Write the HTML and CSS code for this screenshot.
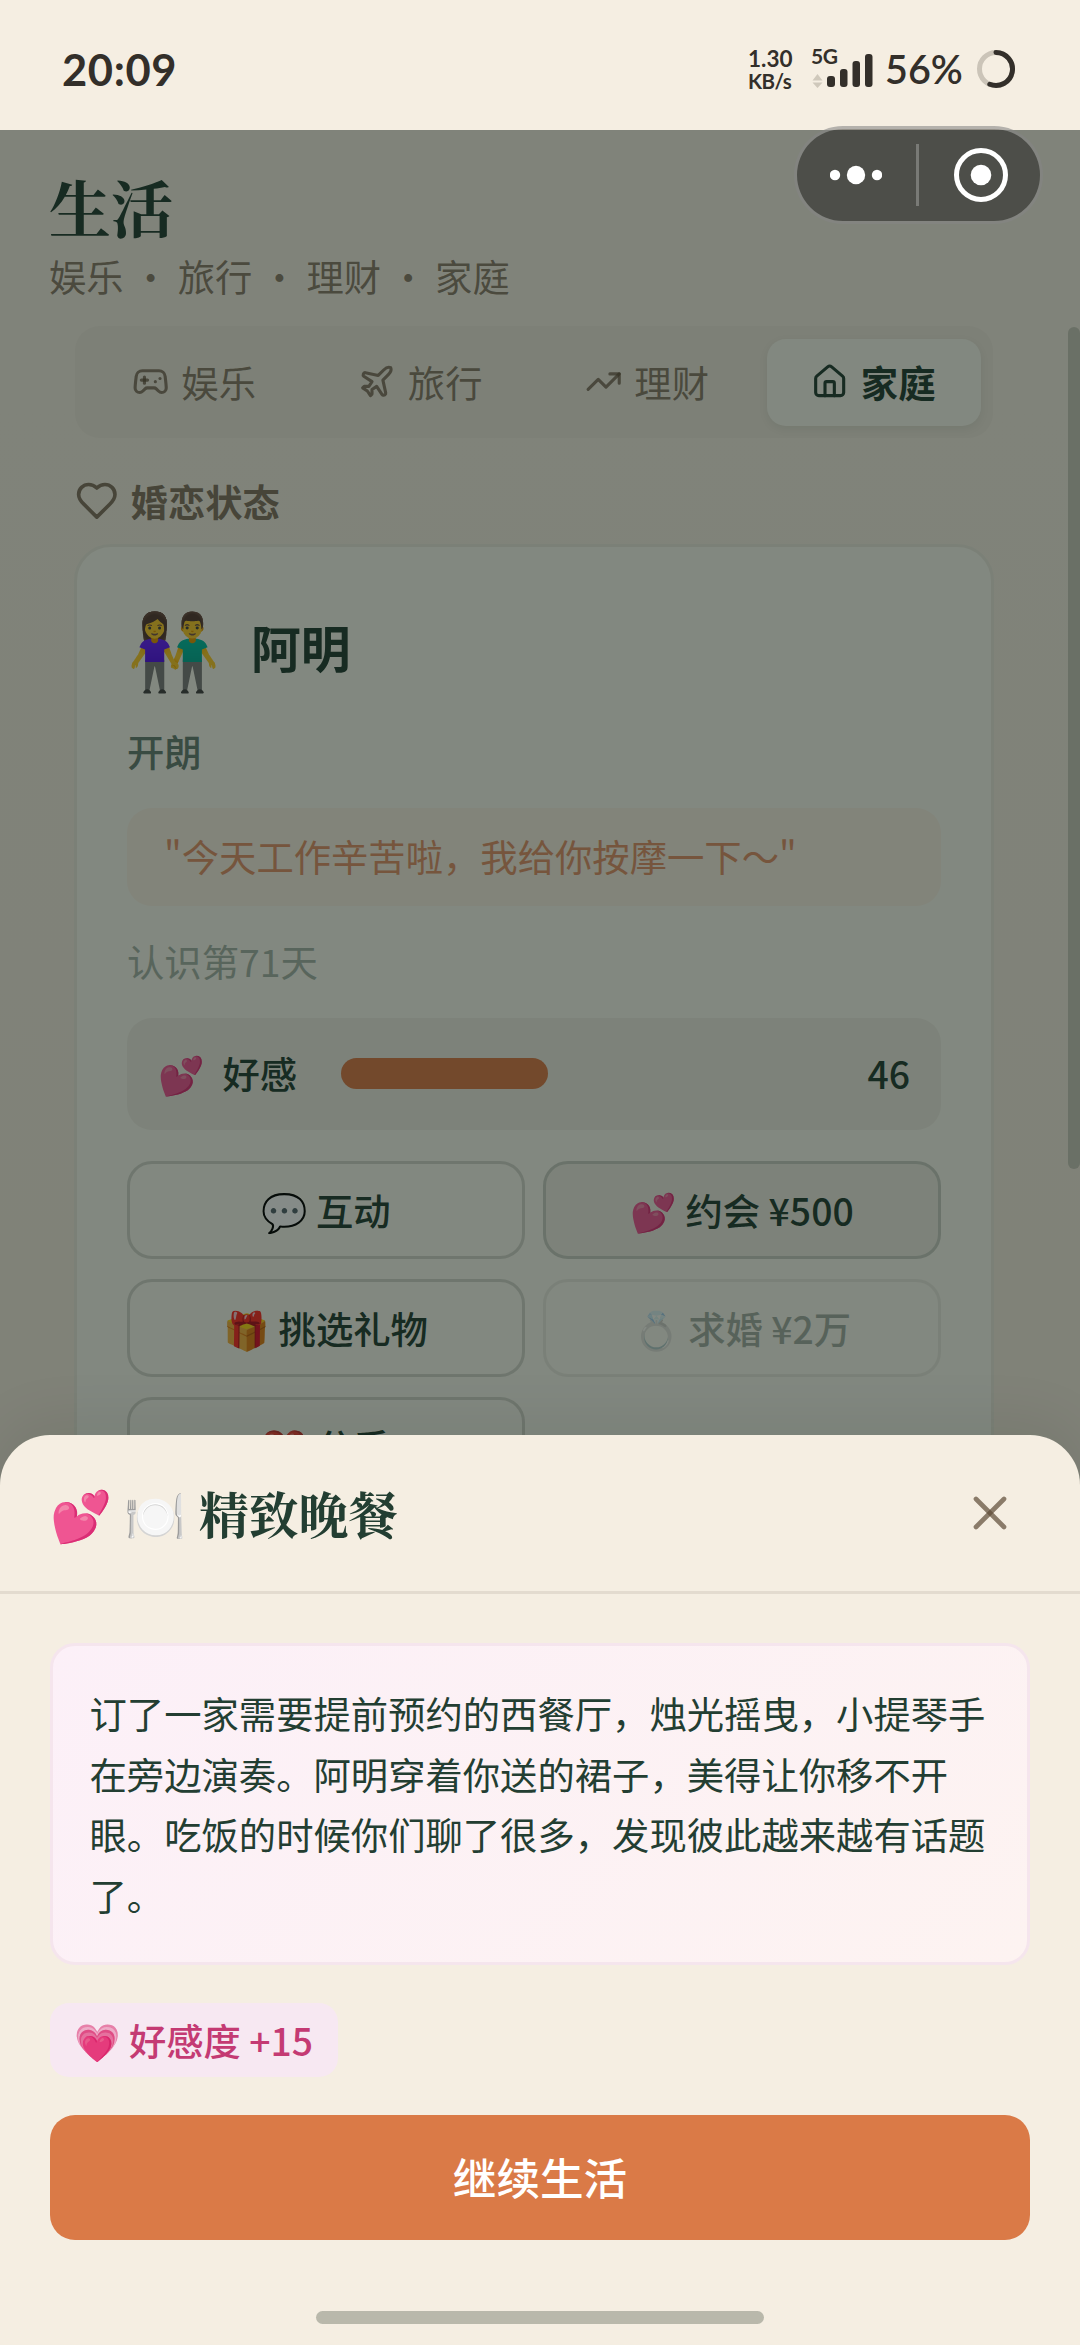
FILE: index.html
```html
<!DOCTYPE html>
<html lang="zh-CN">
<head>
<meta charset="utf-8">
<title>生活</title>
<link rel="stylesheet" href="styles.css">
</head>
<body>
<div class="phone">
  <header class="status">
    <span class="clock">20:09</span>
    <div class="status-right">
      <div class="speed"><span>1.30</span><span class="unit">KB/s</span></div>
      <div class="signal">
        <span class="net">5G</span>
        <svg width="62" height="42" viewBox="0 0 62 42">
          <path d="M0.500 34.500L5.500 28L10.500 34.500ZM0.500 36.500H10.500L5.500 42Z" fill="#cfc8bb"/>
          <g fill="#332f2a"><rect x="15" y="30" width="8" height="11" rx="3"/><rect x="28" y="23" width="7.500" height="18" rx="3"/><rect x="40.500" y="15" width="7.500" height="26" rx="3"/><rect x="53" y="8" width="7.500" height="33" rx="3"/></g>
        </svg>
      </div>
      <span class="percent">56%</span>
      <svg class="ring" width="40" height="40" viewBox="0 0 40 40" fill="none" stroke-width="5">
        <circle cx="20" cy="20" r="16.500" stroke="#cbc4b8"/>
        <path d="M20 3.500A16.500 16.500 0 1 1 13.800 35.300" stroke="#332f2a" stroke-linecap="round"/>
      </svg>
    </div>
  </header>

  <main class="screen">
    <div class="page">
      <h1 class="title">生活</h1>
      <p class="subtitle">娱乐 ・ 旅行 ・ 理财 ・ 家庭</p>
      <nav class="tabs">
        <div class="tab">
          <svg class="icon" viewBox="0 0 24 24"><path d="M6 11h4"/><path d="M8 9v4"/><path d="M15 12h.01"/><path d="M18 10h.01"/><path d="M17.320 5H6.680a4 4 0 0 0-3.978 3.590c-.006.052-.010.101-.017.152C2.604 9.416 2 14.456 2 16a3 3 0 0 0 3 3c1 0 1.500-.5 2-1l1.414-1.414A2 2 0 0 1 9.828 16h4.344a2 2 0 0 1 1.414.586L17 18c.5.5 1 1 2 1a3 3 0 0 0 3-3c0-1.545-.604-6.584-.685-7.258-.007-.050-.011-.100-.017-.151A4 4 0 0 0 17.320 5z"/></svg>
          <span>娱乐</span>
        </div>
        <div class="tab">
          <svg class="icon" viewBox="0 0 24 24"><path d="M17.800 19.200 16 11l3.500-3.500C21 6 21.500 4 21 3c-1-.5-3 0-4.500 1.500L13 8 4.800 6.200c-.5-.1-.9.1-1.100.5l-.3.5c-.2.5-.1 1 .3 1.300L9 12l-2 3H4l-1 1 3 2 2 3 1-1v-3l3-2 3.500 5.300c.3.4.8.5 1.300.3l.5-.2c.4-.3.6-.7.5-1.200z"/></svg>
          <span>旅行</span>
        </div>
        <div class="tab">
          <svg class="icon" viewBox="0 0 24 24"><path d="M22 7 13.500 15.500l-5-5L2 17"/><path d="M16 7h6v6"/></svg>
          <span>理财</span>
        </div>
        <div class="tab active">
          <svg class="icon" viewBox="0 0 24 24"><path d="M15 21v-8a1 1 0 0 0-1-1h-4a1 1 0 0 0-1 1v8"/><path d="M3 10a2 2 0 0 1 .709-1.528l7-5.999a2 2 0 0 1 2.582 0l7 5.999A2 2 0 0 1 21 10v9a2 2 0 0 1-2 2H5a2 2 0 0 1-2-2z"/></svg>
          <span>家庭</span>
        </div>
      </nav>

      <h2 class="section">
        <svg class="icon heart" viewBox="0 0 24 24"><path d="M19 14c1.490-1.460 3-3.210 3-5.500A5.500 5.500 0 0 0 16.500 3c-1.760 0-3 .5-4.500 2-1.500-1.500-2.740-2-4.500-2A5.500 5.500 0 0 0 2 8.500c0 2.300 1.500 4.050 3 5.500l7 7Z"/></svg>
        <span>婚恋状态</span>
      </h2>

      <section class="card">
        <div class="person"><span class="avatar">👫</span><span class="name">阿明</span></div>
        <p class="trait">开朗</p>
        <p class="quote">"今天工作辛苦啦，我给你按摩一下～"</p>
        <p class="days">认识第71天</p>
        <div class="stat">
          <span class="stat-icon">💕</span><span class="stat-label">好感</span>
          <div class="track"><div class="fill" style="width:46%"></div></div>
          <span class="stat-value">46</span>
        </div>
        <div class="actions">
          <div class="action">💬 互动</div>
          <div class="action featured">💕 约会 ¥500</div>
          <div class="action">🎁 挑选礼物</div>
          <div class="action disabled">💍 求婚 ¥2万</div>
          <div class="action">💔 分手</div>
        </div>
      </section>
      <div class="scrollbar"></div>
    </div>
    <div class="overlay"></div>

    <section class="sheet">
      <div class="sheet-head">
        <h2 class="sheet-title">💕 🍽️ 精致晚餐</h2>
        <svg class="icon close" viewBox="0 0 24 24"><path d="M18 6 6 18"/><path d="m6 6 12 12"/></svg>
      </div>
      <div class="sheet-body">
        <p class="story">订了一家需要提前预约的西餐厅，烛光摇曳，小提琴手在旁边演奏。阿明穿着你送的裙子，美得让你移不开眼。吃饭的时候你们聊了很多，发现彼此越来越有话题了。</p>
        <span class="chip">💗 好感度 +15</span>
        <div class="continue">继续生活</div>
      </div>
      <div class="home-bar"></div>
    </section>
  </main>

  <div class="capsule">
    <svg height="20" viewBox="0 0 52 20" class="dots" fill="#fff"><circle cx="5" cy="10" r="5.200"/><circle cx="26" cy="10" r="9.200"/><circle cx="47" cy="10" r="5.200"/></svg>
    <i class="divider"></i>
    <svg width="56" height="56" viewBox="0 0 56 56" class="target"><circle cx="28" cy="28" r="24.500" fill="none" stroke="#fff" stroke-width="5"/><circle cx="28" cy="28" r="10.300" fill="#fff"/></svg>
  </div>
</div>
</body>
</html>
```
FILE: styles.css
```css
* { box-sizing: border-box; }
body, h1, h2, p { margin: 0; }
body {
  background: #f5eee2;
  color: #233e32;
  font-family: "Noto Sans CJK SC", "Noto Color Emoji", sans-serif;
  font-size: 37.35px;
}
.phone { position: relative; width: 1080px; height: 2345px; overflow: hidden; display: flex; flex-direction: column; }

/* system status bar */
.status {
  height: 130px; flex: none; padding: 0 64px 0 62px;
  display: flex; justify-content: space-between;
  font-family: Lato, sans-serif; font-weight: 700; color: #332f2a;
}
.clock { font-size: 43.500px; line-height: 52px; padding-top: 43px; letter-spacing: .6px; }
.status-right { display: flex; align-items: flex-start; }
.speed { display: flex; flex-direction: column; font-size: 22.500px; line-height: 22px; padding-top: 48px; width: 64px; white-space: nowrap; }
.unit { font-size: 20.500px; letter-spacing: -.5px; }
.signal { width: 62px; display: flex; flex-direction: column; padding-top: 46px; }
.net { font-size: 21px; line-height: 20px; height: 0; letter-spacing: -.5px; margin-left: -1px; }
.percent { font-size: 39.500px; line-height: 48px; padding-top: 45px; font-weight: 600; width: 91px; margin-left: 11px; }
.ring { margin-top: 49px; }

.screen { position: relative; flex: 1; }
.page { position: relative; height: 1400px; overflow: hidden; padding: 44px 87px 0 50px; background: linear-gradient(#f5eee2 20%, #f5ecde); }
.overlay { position: absolute; inset: 0; background: rgba(11, 24, 18, 0.5); }

.title, .sheet-title { font-family: "Noto Serif CJK SC", "Noto Color Emoji", "Liberation Serif", serif; font-weight: 700; }
.title { font-size: 62px; line-height: 66px; margin-left: -1px; }
.subtitle { line-height: 52px; margin: 10px 0 0 -1px; color: rgba(92, 74, 54, .7); }

.icon { width: 37.350px; height: 37.350px; flex: none; fill: none; stroke: currentColor; stroke-width: 2; stroke-linecap: round; stroke-linejoin: round; }

.tabs {
  margin: 24px 0 0 24.500px; height: 112px; padding: 12.500px;
  display: grid; grid-template-columns: repeat(4, 1fr); gap: 12.500px;
  border-radius: 25px; background: #eee8dc;
}
.tab { display: flex; align-items: center; justify-content: center; gap: 12px; color: rgba(92, 74, 54, .7); line-height: 52px; border-radius: 19px; }
.tab.active { background: #f9f8ee; color: #233e32; font-weight: 700; box-shadow: 0 3px 9px rgba(35, 62, 50, .08); }

.section { display: flex; align-items: center; gap: 12.500px; margin: 36px 0 0 24.500px; font-size: 37.350px; line-height: 54px; font-weight: 700; color: rgba(92, 74, 54, .75); }
.heart { width: 43.600px; height: 43.600px; }

.card { margin: 16px -1px 0 24px; height: 1000px; padding: 42.500px 50px 0; border: 3px solid #eae9dd; border-radius: 37px; background: #f9f8ee; }
.person { display: flex; align-items: center; gap: 31px; height: 112px; }
.avatar { font-size: 74.700px; line-height: 112px; }
.name { font-size: 49.800px; line-height: 72px; font-weight: 700; }
.trait { line-height: 54px; margin-top: 22.500px; font-weight: 500; color: #677e72; }
.quote { margin-top: 30px; height: 98px; padding: 21px 37px; line-height: 54px; border-radius: 25px; background: #f8f0e2; color: #e09369; }
.days { line-height: 54px; margin-top: 28px; color: #a5b2a6; }
.stat { margin-top: 29.500px; height: 112px; padding: 0 31px; display: flex; align-items: center; border-radius: 25px; background: #eeede2; font-weight: 500; line-height: 54px; padding-bottom: 1px; }
.stat-icon { width: 64.500px; }
.stat-label { width: 118.500px; }
.track { width: 450px; height: 31px; }
.fill { height: 100%; border-radius: 16px; background: #da7a47; }
.stat-value { margin-left: auto; }
.actions { margin-top: 31px; display: grid; grid-template-columns: 1fr 1fr; gap: 19.500px 18.700px; font-weight: 500; }
.action { height: 98.700px; display: flex; align-items: center; justify-content: center; border: 3px solid #d2d5cb; border-radius: 25px; white-space: pre; }
.action.featured { background: #eeede2; border-color: #c8cdc2; }
.action.disabled { opacity: .4; }
.scrollbar { position: absolute; right: 0; top: 197px; width: 12px; height: 842px; border-radius: 6px; background: #c9c8ba; }

/* bottom sheet */
.sheet { position: absolute; left: 0; right: 0; bottom: 0; height: 910px; background: #f5eee2; border-radius: 50px 50px 0 0; box-shadow: 0 -12px 60px rgba(11, 24, 18, .08); display: flex; flex-direction: column; }
.sheet-head { height: 159px; padding: 0 62px 0 50px; display: flex; align-items: center; justify-content: space-between; border-bottom: 3px solid #e3dbcf; }
.sheet-title { font-size: 49.800px; line-height: 72px; }
.close { width: 56px; height: 56px; color: rgba(92, 74, 54, .7); }
.sheet-body { padding: 49px 50px 0; display: flex; flex-direction: column; align-items: flex-start; }
.story { height: 321.500px; padding: 37px 36.500px; line-height: 60.700px; border: 3px solid #f5e5ed; border-radius: 25px; background: linear-gradient(135deg, #fcf0f8, #fdf3f1); }
.chip { margin-top: 38.500px; height: 74px; padding: 0 25px 0 24px; line-height: 74px; border-radius: 19px; background: #f7e8f2; color: #c43a73; font-weight: 500; }
.continue { margin-top: 38px; width: 100%; height: 124.500px; line-height: 123px; text-align: center; font-size: 43.600px; font-weight: 500; color: #fff; background: #da7a47; border-radius: 25px; }
.home-bar { margin: auto auto 21px; width: 448px; height: 13px; border-radius: 7px; background: #b9b8ab; }

/* mini-program capsule */
.capsule { position: absolute; left: 794px; top: 125.500px; width: 249px; height: 98px; border: 3px solid rgba(255, 255, 255, .3); border-radius: 49px; background: rgba(0, 0, 0, .4); display: flex; align-items: center; }
.dots { width: 52px; margin-left: 33px; }
.divider { width: 3px; height: 62px; margin-left: 34px; background: rgba(255, 255, 255, .25); }
.target { margin-left: 34px; }
```
